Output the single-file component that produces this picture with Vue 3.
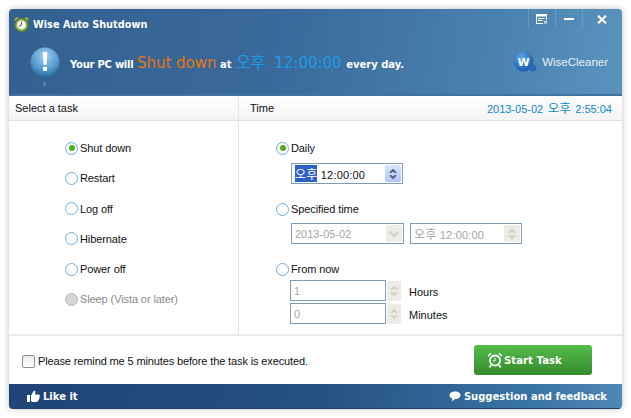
<script setup>
const tasks = [
  { label: 'Shut down', on: true },
  { label: 'Restart' },
  { label: 'Log off' },
  { label: 'Hibernate' },
  { label: 'Power off' },
  { label: 'Sleep (Vista or later)', disabled: true },
]
</script>

<template>
  <div class="page">
    <div class="win">
      <header class="head">
        <div class="titlebar">
          <svg class="appicon" width="15" height="16" viewBox="0 0 16 17">
            <path d="M1 5.5C0 3 2 0.6 4.8 1.6Z" fill="#cfe0a8" stroke="#5c7a2c" />
            <path d="M15 5.5C16 3 14 0.6 11.2 1.6Z" fill="#cfe0a8" stroke="#5c7a2c" />
            <circle cx="8" cy="9.5" r="7" fill="#86ad45" stroke="#5a7c2e" />
            <circle cx="8" cy="9.5" r="4.8" fill="#f6f6f0" />
            <path d="M8 9.5L8 6M8 9.5L5.2 10.8" stroke="#8a3a2a" stroke-width="1" fill="none" />
          </svg>
          <span class="title">Wise Auto Shutdown</span>
          <div class="winbtns">
            <div class="wb">
              <svg width="12" height="10" viewBox="0 0 12 10"><path d="M0.5 0.5H10.5V6M0.5 0.5V9.5H7" fill="none" stroke="#fff"/><rect x="0.5" y="0.5" width="10" height="2" fill="#fff"/><path d="M2 4.5H8.5M2 6.5H6.5" stroke="#fff"/><path d="M8 7L11 9.5M11 7L8 9.5" stroke="#fff"/></svg>
            </div>
            <div class="wb"><span class="min"></span></div>
            <div class="wb wide">
              <svg width="10" height="9" viewBox="0 0 10 9"><path d="M1 0.8L9 8.2M9 0.8L1 8.2" stroke="#fff" stroke-width="2.2"/></svg>
            </div>
          </div>
        </div>
        <div class="banner">
          <svg class="bubble" width="32" height="44" viewBox="0 0 32 44">
            <defs>
              <radialGradient id="bl" cx="50%" cy="30%" r="70%">
                <stop offset="0" stop-color="#a4d0ee" />
                <stop offset="0.6" stop-color="#5b9fd3" />
                <stop offset="1" stop-color="#2f6fa8" />
              </radialGradient>
            </defs>
            <circle cx="16" cy="16" r="14.5" fill="url(#bl)" />
            <path d="M13.6 6H18.4L17.3 19H14.7Z" fill="#fff" />
            <rect x="14" y="21" width="4" height="4" fill="#fff" />
            <rect x="14" y="36" width="3" height="4" fill="#6f98bd" opacity="0.6" />
          </svg>
          <p class="msg">
            <span class="tight">Your PC will</span> <span class="hl orange">Shut down</span> at <span class="hl blue"><span class="ko">오후</span> 12:00:00</span> <span class="tail">every day.</span>
          </p>
          <div class="brand">
            <svg width="24" height="22" viewBox="0 0 24 22">
              <defs>
                <radialGradient id="wl" cx="40%" cy="30%" r="75%">
                  <stop offset="0" stop-color="#5fa8ea" />
                  <stop offset="1" stop-color="#1552a8" />
                </radialGradient>
              </defs>
              <circle cx="10.5" cy="10.5" r="10" fill="url(#wl)" />
              <circle cx="20" cy="17" r="3.5" fill="#2a68b8" />
              <text x="10.5" y="15" text-anchor="middle" class="wtext">W</text>
            </svg>
            <span>WiseCleaner</span>
          </div>
        </div>
      </header>

      <div class="tabs">
        <div class="tab left">Select a task</div>
        <div class="tab right">
          <span>Time</span>
          <span class="now">2013-05-02 <span class="ko13">오후</span> 2:55:04</span>
        </div>
      </div>

      <div class="body">
        <section class="tasks">
          <label v-for="t in tasks" :key="t.label" class="radio" :class="{ off: t.disabled }">
            <i class="dot" :class="{ on: t.on, dis: t.disabled }"></i>{{ t.label }}
          </label>
        </section>

        <section class="time">
          <label class="radio"><i class="dot on"></i>Daily</label>
          <div class="field active w112">
            <span class="val"><b class="sel ko12">오후</b> 12:00:00</span>
            <span class="spin blue">
              <svg class="chev" viewBox="0 0 8 4"><path d="M1 4L4 1L7 4" /></svg>
              <svg class="chev" viewBox="0 0 8 4"><path d="M1 0L4 3L7 0" /></svg>
            </span>
          </div>

          <label class="radio r2"><i class="dot"></i>Specified time</label>
          <div class="line">
            <div class="field dim w113">
              <span>2013-05-02</span>
              <span class="spin">
                <svg class="chev big" viewBox="0 0 10 6"><path d="M1 1L5 5L9 1" /></svg>
              </span>
            </div>
            <div class="field dim w112b">
              <span class="val"><span class="ko12">오후</span> 12:00:00</span>
              <span class="spin">
                <svg class="chev" viewBox="0 0 8 4"><path d="M1 4L4 1L7 4" /></svg>
                <svg class="chev" viewBox="0 0 8 4"><path d="M1 0L4 3L7 0" /></svg>
              </span>
            </div>
          </div>

          <label class="radio r3"><i class="dot"></i>From now</label>
          <div class="num">
            <div class="field dim numf"><span>1</span></div>
            <span class="spin free">
              <svg class="chev" viewBox="0 0 8 4"><path d="M1 4L4 1L7 4" /></svg>
              <svg class="chev" viewBox="0 0 8 4"><path d="M1 0L4 3L7 0" /></svg>
            </span>
            <span class="unit">Hours</span>
          </div>
          <div class="num n2">
            <div class="field dim numf"><span>0</span></div>
            <span class="spin free">
              <svg class="chev" viewBox="0 0 8 4"><path d="M1 4L4 1L7 4" /></svg>
              <svg class="chev" viewBox="0 0 8 4"><path d="M1 0L4 3L7 0" /></svg>
            </span>
            <span class="unit">Minutes</span>
          </div>
        </section>
      </div>

      <div class="action">
        <label class="check"><i class="box"></i>Please remind me 5 minutes before the task is executed.</label>
        <button class="start">
          <svg width="16" height="16" viewBox="0 0 16 16">
            <path d="M1 5C0.5 2.5 2.5 0.8 5 1.5ZM15 5C15.5 2.5 13.5 0.8 11 1.5Z" fill="#fff" />
            <circle cx="8" cy="8.5" r="5" fill="none" stroke="#fff" stroke-width="1.8" />
            <path d="M8 5.8V8.8H5.8" stroke="#fff" fill="none" />
            <path d="M4 13L2.5 15.5M12 13L13.5 15.5" stroke="#fff" stroke-width="1.6" />
          </svg>
          Start Task
        </button>
      </div>

      <footer class="foot">
        <span class="flink">
          <svg width="13" height="12" viewBox="0 0 13 12"><rect x="0" y="5" width="3" height="7" fill="#fff"/><path d="M4 5.5L7 0.5C8.5 0.5 8.8 2 8 4.4H12C13 4.4 13 6 12.4 6.4C13 7.4 12.6 8.4 12 8.7C12.2 9.8 11.6 10.4 11 10.6C11 11.6 10.4 12 9.6 12H5.5L4 11Z" fill="#fff"/></svg>
          Like it
        </span>
        <span class="flink">
          <svg width="12" height="11" viewBox="0 0 12 11"><path d="M6 0.5C9.2 0.5 11.5 2.1 11.5 4.2S9.2 8 6 8L2.8 10.5L3.4 7.5C1.6 6.9 0.5 5.7 0.5 4.2C0.5 2.1 2.8 0.5 6 0.5Z" fill="#fff"/></svg>
          Suggestion and feedback
        </span>
      </footer>
    </div>
  </div>
</template>

<style>
html, body { margin: 0; background: #fff; }
</style>

<style scoped>
.page {
  width: 631px;
  height: 418px;
  box-sizing: border-box;
  padding: 9px;
  overflow: hidden;
  font-family: "Liberation Sans", "Noto Sans CJK KR", sans-serif;
  font-size: 11px;
  color: #111;
}
.win {
  width: 613px;
  height: 400px;
  display: flex;
  flex-direction: column;
  background: #fff;
  border-radius: 4px;
  box-shadow: 0 0 6px rgba(0, 0, 0, 0.25);
  overflow: hidden;
}
.head {
  height: 87px;
  flex: none;
  box-sizing: border-box;
  background: linear-gradient(100deg, #33608f 0%, #3a6a9b 45%, #4a83af 80%, #5a93bd 100%);
  border-bottom: 2px solid #42739f;
  color: #fff;
  display: flex;
  flex-direction: column;
}
.titlebar { height: 22px; display: flex; align-items: flex-start; padding-left: 5px; }
.appicon { margin-top: 7px; }
.title { font: 700 9.75px "DejaVu Sans", sans-serif; margin: 10px 0 0 4px; }
.winbtns { margin-left: auto; display: flex; }
.wb {
  width: 26px;
  height: 20px;
  border-left: 1px solid rgba(255, 255, 255, 0.14);
  display: flex;
  align-items: center;
  justify-content: center;
}
.wb.wide { width: 40px; padding-right: 2px; box-sizing: border-box; }
.min { width: 10px; height: 2px; background: #fff; }
.banner { display: flex; align-items: flex-start; padding: 14px 14px 0 20px; }
.bubble { flex: none; margin-top: 1px; }
.msg { margin: 0 0 0 9px; padding-top: 6px; font: 700 10px/20px "DejaVu Sans", "Noto Sans CJK KR", sans-serif; white-space: nowrap; }
.tight { letter-spacing: -0.25px; }
.tail { margin-left: 1px; }
.hl { font-weight: 400; font-size: 15px; }
.ko { font-size: 16px; font-family: "Noto Sans CJK KR", sans-serif; margin: 0 4px 0 1px; }
.ko12 { font-size: 12px; font-family: "Noto Sans CJK KR", sans-serif; }
.ko13 { font-size: 12.5px; margin: 0 1.5px; font-family: "Noto Sans CJK KR", sans-serif; }
.orange { color: #e8730f; }
.blue { color: #1b9ae8; }
.brand { margin-left: auto; display: flex; align-items: center; gap: 5px; font-size: 11.5px; color: #e8f1f8; padding-top: 6px; }
.wtext { font: 700 11px "DejaVu Sans", sans-serif; fill: #fff; }
.tabs {
  height: 24px;
  flex: none;
  display: flex;
  background: linear-gradient(#fff, #f4f4f4);
  border-bottom: 1px solid #e2e2e2;
}
.tab { line-height: 24px; }
.tab.left { width: 230px; box-sizing: border-box; padding-left: 6px; border-right: 1px solid #e6e6e6; }
.tab.right { flex: 1; display: flex; justify-content: space-between; padding: 0 10px 0 11px; }
.now { color: #0a86d0; }
.body { height: 215px; flex: none; box-sizing: border-box; display: flex; border-bottom: 2px solid #ebebeb; }
.tasks {
  width: 230px;
  box-sizing: border-box;
  border-right: 1px solid #e6e6e6;
  padding: 20px 0 0 56px;
  display: flex;
  flex-direction: column;
  gap: 16.3px;
}
.time { flex: 1; padding: 20px 0 0 37px; display: flex; flex-direction: column; }
.radio { display: flex; align-items: center; height: 14px; gap: 2px; white-space: nowrap; letter-spacing: -0.1px; }
.radio.off { color: #8a8a8a; }
.dot {
  width: 13px;
  height: 13px;
  box-sizing: border-box;
  border-radius: 50%;
  border: 1px solid #6aaee0;
  background: #fff;
  display: flex;
  align-items: center;
  justify-content: center;
}
.dot.on::after { content: ""; width: 6px; height: 6px; border-radius: 50%; background: #4fae1e; }
.dot.dis { background: #d6d6d6; border-color: #b4b4b4; }
.field {
  height: 21px;
  box-sizing: border-box;
  border: 1px solid #7f9db9;
  background: #fff;
  display: flex;
  align-items: center;
  justify-content: space-between;
  padding: 0 1px 0 3px;
  white-space: nowrap;
}
.val { letter-spacing: 0.2px; }
.w112 { width: 112px; margin: 8px 0 0 15px; }
.active { color: #111; }
.sel { font-weight: 400; background: #2f60c4; color: #fff; }
.dim { color: #a6a69e; }
.r2 { margin-top: 18px; }
.line { display: flex; gap: 6px; margin: 7px 0 0 15px; }
.w113 { width: 113px; }
.w112b { width: 112px; }
.r3 { margin-top: 18px; }
.num { display: flex; align-items: center; margin: 3px 0 0 14px; height: 21px; }
.r3 + .num { margin-top: 4px; }
.n2 { margin-top: 2px; }
.numf { width: 96px; }
.unit { margin-left: 8px; padding-top: 2px; }
.spin {
  width: 16px;
  height: 17px;
  display: flex;
  flex-direction: column;
  align-items: center;
  justify-content: center;
  gap: 2px;
  background: #ecece6;
  border-radius: 2px;
  flex: none;
}
.spin.blue { background: linear-gradient(#dbe5fb, #aec5f5); }
.spin.free { margin-left: 1px; width: 14px; height: 20px; }
.chev { width: 8px; height: 4px; fill: none; stroke: #cfcfc6; stroke-width: 1.8; }
.chev.big { width: 10px; height: 6px; stroke-width: 2; }
.spin.blue .chev { stroke: #4d6185; }
.action {
  height: 48px;
  flex: none;
  display: flex;
  align-items: center;
  justify-content: space-between;
  padding: 0 30px 0 13px;
}
.check { display: flex; align-items: center; gap: 3px; margin-top: 2px; letter-spacing: -0.13px; }
.box {
  width: 13px;
  height: 13px;
  box-sizing: border-box;
  border: 1px solid #8f8f8f;
  border-radius: 2px;
  background: linear-gradient(#ececec, #fff);
}
.start {
  width: 118px;
  height: 30px;
  border: 0;
  border-radius: 3px;
  background: linear-gradient(#55bd4c, #348a2d);
  color: #fff;
  font: 700 10.2px "DejaVu Sans", sans-serif;
  display: flex;
  align-items: center;
  padding: 0 0 0 13px;
  gap: 1px;
}
.foot {
  flex: 1;
  display: flex;
  align-items: center;
  justify-content: space-between;
  padding: 0 15px 0 18px;
  background: linear-gradient(100deg, #1f4475 0%, #25507f 50%, #3a74a6 85%, #4f88b4 100%);
  border-bottom: 1px solid #1f3f68;
  color: #fff;
  font: 700 10px "DejaVu Sans", sans-serif;
}
.flink { display: flex; align-items: center; gap: 3px; }
</style>
